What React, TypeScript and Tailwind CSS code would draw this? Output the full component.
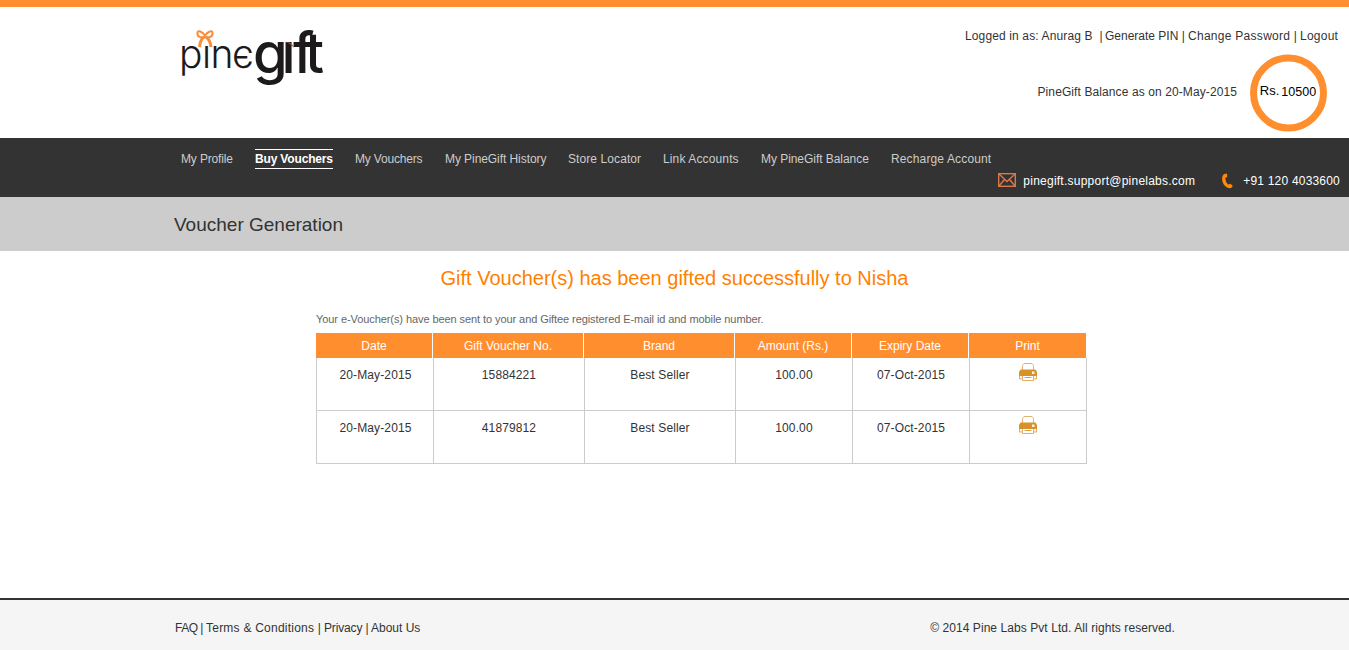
const navItems = [
  { label: "My Profile", box: "w-[74px] tracking-[-0.15px]" },
  { label: "Buy Vouchers", box: "w-[100px] tracking-[-0.16px]", active: true },
  { label: "My Vouchers", box: "w-[90px] tracking-[-0.18px]" },
  { label: "My PineGift History", box: "w-[123px] tracking-[-0.07px]" },
  { label: "Store Locator", box: "w-[95px] tracking-[0.09px]" },
  { label: "Link Accounts", box: "w-[98px] tracking-[0.13px]" },
  { label: "My PineGift Balance", box: "w-[130px] tracking-[-0.05px]" },
  { label: "Recharge Account", box: "w-[110px] tracking-[0.14px]" },
];

const columns = ["Date", "Gift Voucher No.", "Brand", "Amount (Rs.)", "Expiry Date", "Print"];

const vouchers = [
  ["20-May-2015", "15884221", "Best Seller", "100.00", "07-Oct-2015"],
  ["20-May-2015", "41879812", "Best Seller", "100.00", "07-Oct-2015"],
];

const tracks = "grid grid-cols-[117px_151px_151px_117px_117px_117px]";

function Logo() {
  return (
    <svg width="170" height="90" viewBox="0 0 170 90" role="img" aria-label="pinegift" fontFamily="Inter, sans-serif" fill="#1c1a1b">
      <text x="3 26 34.5 56" y="61" fontWeight="300" fontSize="39">pınє</text>
      <text x="77 105.5 117 129" y="66" fontWeight="500" fontSize="56">gıft</text>
      <g fill="none" stroke="#fb8b35" strokeWidth="2">
        <path d="M29 28.500C26 24 21.500 23 21.500 26C21 30 25 31 29 30C33 31 37 30 36.500 26C36.500 23 32 24 29 28.500" />
        <path d="M28 30C25 32 24 35 23.500 40M30 30C33 32 34.500 35 35 40" strokeWidth="3" />
      </g>
      <path d="M109 35q7-1 9 6q-4-5-9-6" fill="#a94c2c" />
    </svg>
  );
}

function MailIcon() {
  return (
    <svg width="18" height="14" viewBox="0 0 18 14" fill="none" stroke="#d9794a" strokeWidth="1.4">
      <rect x=".7" y=".7" width="16.6" height="12.6" />
      <path d="M1 1L9 8.5L17 1M1 13L6.5 6.5M17 13L11.5 6.5" />
    </svg>
  );
}

function PhoneIcon() {
  return (
    <svg width="11" height="16" viewBox="0 0 11 16" fill="#ff8a0a">
      <path d="M1.500 1.500L4 .5Q4.800.3 5 1.300L5.300 3.500Q5.200 4.300 3.300 4.800Q3.200 8.800 6.200 11.800Q7.800 10.500 8.600 11L10.400 12.600Q10.800 13.200 10.200 14Q8.600 15.500 6.500 15.100Q2.500 13.800.8 9.500Q-.9 4 1.500 1.500Z" />
    </svg>
  );
}

function PrinterIcon() {
  return (
    <svg width="18" height="18" viewBox="0 0 18 18">
      <path d="M3.500 8V2.500L5 .5H13L14.500 2.500V8" fill="#fff" stroke="#e2b170" />
      <path d="M.5 12V16H17.500V12Z" fill="#fff8ed" stroke="#e2ac62" />
      <path d="M1.500 6.500H16.500L18 9V13H0V9Z" fill="#d8922b" />
      <rect x="13" y="8.500" width="2.500" height="2.500" fill="#fff2da" />
      <path d="M3.500 13V17.500H14.500V13" fill="#fff" stroke="#e2ac62" />
      <path d="M5.500 14.500H12.500" stroke="#dba04c" />
    </svg>
  );
}

export default function App() {
  return (
    <div className="flex h-[650px] w-full flex-col overflow-hidden bg-white font-['Liberation_Sans',Arial,sans-serif] text-[12px] leading-[16px] text-[#333]">
      <header className="flex h-[138px] shrink-0 justify-between border-t-[7px] border-[#ff8e2e]">
        <div className="pl-[176px]">
          <Logo />
        </div>
        <div className="flex flex-col items-end">
          <div className="mt-[21px] mr-[10px] flex whitespace-pre">
            <span className="w-[140px] tracking-[0.13px]">Logged in as: Anurag B  | </span>
            <span className="w-[83px]">Generate PIN | </span>
            <span className="w-[112px] tracking-[0.28px]">Change Password | </span>
            <span className="w-[39px] tracking-[0.25px]">Logout</span>
          </div>
          <div className="mt-[10px] mr-[22px] flex">
            <span className="mt-[30px] mr-[13px] tracking-[0.1px]">PineGift Balance as on 20-May-2015</span>
            <div className="flex h-[77px] w-[77px] translate-y-[0.5px] justify-center rounded-full border-[7px] border-[#ff8e2e] pt-[21px] pr-px whitespace-nowrap text-black">
              <span className="mr-[2px] text-[13px]">Rs.</span>
              <span className="pt-px text-[12.5px]">10500</span>
            </div>
          </div>
        </div>
      </header>

      <div className="flex h-[59px] shrink-0 flex-col bg-[#333]">
        <nav className="flex h-[35px] pt-[11px] pl-[181px] text-[#ccc]">
          {navItems.map((item) => (
            <div key={item.label} className={item.box + " shrink-0 whitespace-nowrap"}>
              <a className={item.active ? "inline-block h-[20px] w-[78px] border-y border-white pt-px font-bold text-white" : "inline-block pt-[2px]"}>{item.label}</a>
            </div>
          ))}
        </nav>
        <div className="flex justify-end pr-[9px] text-white">
          <span className="mr-[7px]"><MailIcon /></span>
          <span className="mr-[27px] tracking-[0.24px]">pinegift.support@pinelabs.com</span>
          <span className="mr-[10px]"><PhoneIcon /></span>
          <span className="tracking-[0.2px]">+91 120 4033600</span>
        </div>
      </div>

      <div className="flex h-[54px] shrink-0 items-center bg-[#ccc] pt-[2px] pl-[174px]">
        <h1 className="text-[19px] leading-[24px]">Voucher Generation</h1>
      </div>

      <main className="flex h-[347px] shrink-0 flex-col">
        <h2 className="mt-[15px] text-center text-[20px] leading-[24px] text-[#ff7f00]">Gift Voucher(s) has been gifted successfully to Nisha</h2>
        <div className="ml-[316px] w-[771px]">
          <p className="mt-[21px] h-[22px] text-[11px] tracking-[-0.077px] text-[#666]">Your e-Voucher(s) have been sent to your and Giftee registered E-mail id and mobile number.</p>
          <div className={tracks + " h-[25px] w-[770px] bg-[#ff8e2e] text-center text-white"}>
            {columns.map((c) => (
              <div key={c} className="border-r border-white pt-[5px] last:border-r-0">{c}</div>
            ))}
          </div>
          <div className="border-l border-[#ccc]">
            {vouchers.map((row) => (
              <div key={row[1]} className={tracks + " h-[53px] text-center"}>
                {row.map((cell) => (
                  <div key={cell} className="border-r border-b border-[#ccc] pt-[9px] tracking-[0.12px] first:pl-px">{cell}</div>
                ))}
                <div className="flex justify-center border-r border-b border-[#ccc] pt-[5px]"><PrinterIcon /></div>
              </div>
            ))}
          </div>
        </div>
      </main>

      <footer className="flex h-[52px] shrink-0 justify-between border-t-2 border-[#333] bg-[#f5f5f5] pt-[20px] pr-[174px] pl-[175px]">
        <div className="flex whitespace-pre">
          <span className="w-[31px] tracking-[-0.5px]">FAQ | </span>
          <span className="w-[118px] tracking-[0.23px]">Terms &amp; Conditions | </span>
          <span className="w-[47px] tracking-[-0.15px]">Privacy | </span>
          <span>About Us</span>
        </div>
        <span className="tracking-[0.07px]">© 2014 Pine Labs Pvt Ltd. All rights reserved.</span>
      </footer>
    </div>
  );
}
